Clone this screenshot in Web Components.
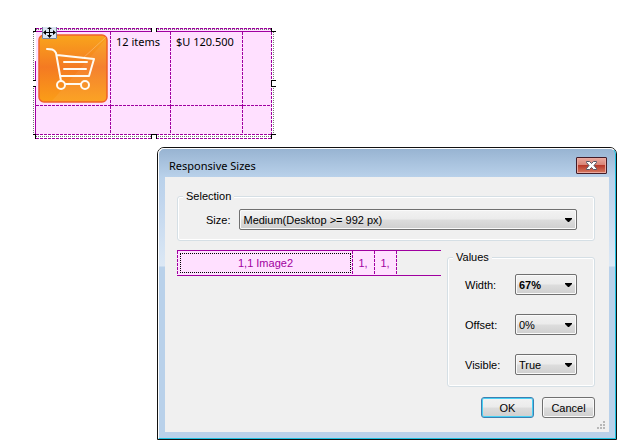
<!DOCTYPE html>
<html lang="en">
<head>
<meta charset="utf-8">
<title>Responsive Sizes</title>
<style>
  body { margin: 0; background: #fff; color: #000; font-family: "Liberation Sans", Arial, sans-serif; font-size: 11px; }
  main { display: flow-root; padding: 28px 7px 8px 33px; }
</style>
</head>
<body>
<main>
  <design-table></design-table>
  <dialog-window caption="Responsive Sizes">
    <group-box caption="Selection">
      <choice-field wide label="Size:" options="Medium(Desktop &gt;= 992 px)|Small|Large"></choice-field>
    </group-box>
    <cell-strip slot="preview"></cell-strip>
    <group-box slot="values" roomy caption="Values">
      <choice-field strong label="Width:" options="67%|50%|100%"></choice-field>
      <choice-field label="Offset:" options="0%|25%|50%"></choice-field>
      <choice-field label="Visible:" options="True|False"></choice-field>
    </group-box>
    <push-button slot="actions" primary>OK</push-button>
    <push-button slot="actions">Cancel</push-button>
  </dialog-window>
</main>
<script>
const define = (name, render) => customElements.define(name, class extends HTMLElement {
  connectedCallback() {
    if (this.shadowRoot) return;
    const t = document.createElement('template');
    t.innerHTML = render(this);
    this.attachShadow({ mode: 'open' }).append(t.content.cloneNode(true));
  }
});

define('design-table', () => `
<style>
  :host { display: grid; position: relative; width: fit-content; grid-template: 4px auto 5px / 3px auto 5px;
    font-family: "Noto Sans", "Open Sans", sans-serif; font-size: 11px;
    --dash-x: repeating-linear-gradient(90deg, #a000a0 0 3px, transparent 3px 4px);
    --dash-y: repeating-linear-gradient(#a000a0 0 3px, transparent 3px 4px);
    --dots-x: repeating-linear-gradient(90deg, #777 0 1px, transparent 1px 2px);
    --dots-y: repeating-linear-gradient(#777 0 1px, transparent 1px 2px); }
  table { border-collapse: collapse; background: #ffe0ff; }
  td { box-sizing: border-box; padding: 2px 2px 0 5px; vertical-align: top; line-height: 16px; white-space: nowrap;
    background: var(--dash-x) bottom / 100% 1px no-repeat, var(--dash-y) right / 1px 100% no-repeat; }
  td:last-child { background: var(--dash-x) bottom / 100% 1px no-repeat; }
  tr:last-child td { background: var(--dash-y) right / 1px 100% no-repeat; }
  tr:last-child td:last-child { background: none; }
  tr { height: 74px; } tr + tr { height: 28px; }
  .c1 { width: 75px; } .c2 { width: 60px; } .c3 { width: 72px; } .c4 { width: 28px; }
  td.pic { padding: 2px 0 0 2px; }
  .pic svg { display: block; }
  .edge { display: flex; align-items: center; justify-content: center; }
  .top { background: var(--dash-x) top / 100% 1px no-repeat, var(--dots-x) 0 1px / 100% 1px no-repeat, linear-gradient(#a000a0, #a000a0) bottom / 100% 1px no-repeat #ffe0ff; }
  .bottom { background: var(--dash-x) top / 100% 1px no-repeat, var(--dots-x) 0 2px / 100% 1px no-repeat, var(--dash-x) bottom / 100% 1px no-repeat; }
  .left { background: var(--dots-y) left / 1px 100% no-repeat, linear-gradient(transparent 29px, #a000a0 29px) right / 1px 100% no-repeat; }
  .right { background: var(--dash-y) left / 1px 100% no-repeat, var(--dots-y) 2px 0 / 1px 100% no-repeat; }
  .left, .right { flex-direction: column; }
  i { flex: none; box-sizing: border-box; background: #fff; width: 6px; height: 5px; border: solid #000; border-width: 0 1px 1px; }
  .bottom i { border-width: 1px 1px 0; }
  .left i { width: 4px; height: 7px; border-width: 1px 1px 1px 0; }
  .right i { width: 5px; height: 7px; border-width: 1px 0 1px 1px; }
  b { box-sizing: border-box; border: 0 solid #000; }
  .tl { border-width: 0 1px 1px 0; } .tr { border-width: 0 0 1px 1px; }
  .bl { border-width: 1px 1px 0 0; } .br { border-width: 1px 0 0 1px; }
  .move { position: absolute; left: 9px; top: -1px; }
</style>
<b class="tl"></b><div class="edge top"><i></i></div><b class="tr"></b>
<div class="edge left"><i></i></div>
<table>
  <tr><td class="c1 pic"><svg width="70" height="69" viewBox="0 0 70 69" role="img" aria-label="Shopping cart">
    <defs><linearGradient id="g" x2="0" y2="1"><stop stop-color="#f9a51c"/><stop offset=".48" stop-color="#f47a22"/><stop offset="1" stop-color="#fb9e17"/></linearGradient></defs>
    <rect x="1" y="1" width="68" height="67" rx="5" fill="url(#g)" stroke="#f0602a" stroke-width="1.5"/>
    <path d="M14 67 68 5v62z" fill="#fff" opacity=".06"/><path d="M44 25 68 3" stroke="#fff" opacity=".25"/>
    <g fill="none" stroke="#fffaf0" stroke-width="2" stroke-linecap="round" stroke-linejoin="round"><path d="M9 15c4 0 7 0 9 4l5 28M19 21l37 4-5 17H22"/><path d="M26 28h23M26 35h22"/><circle cx="23" cy="51" r="4"/><circle cx="47" cy="51" r="4"/><path d="M27 50h16"/></g></svg></td>
    <td class="c2">12 items</td><td class="c3">$U 120.500</td><td class="c4"></td></tr>
  <tr><td></td><td></td><td></td><td></td></tr>
</table>
<div class="edge right"><i></i></div>
<b class="bl"></b><div class="edge bottom"><i></i></div><b class="br"></b>
<svg class="move" width="15" height="12" viewBox="0 0 15 12" aria-hidden="true"><path fill="#dbe6f4" d="M0 0h15v12H0z"/><path d="M.5 0v11.500h14V0" fill="none" stroke="#75849b"/><path d="M7.500 1v9M2 5.500h11" stroke="#000"/><path d="M1 5.500 4 3v5zM14 5.500 11 3v5zM7.500 11 5 8h5zM7.500 0 5 2h5z"/></svg>`);

define('dialog-window', el => `
<style>
  :host { display: block; margin: 8px 0 0 124px; border: 1px solid #111; border-radius: 7px 7px 0 0; background: #fff; }
  .frame { border: 1px solid #fff; border-right-color: #1cc0e0; border-bottom-color: #1cc0e0; border-radius: 6px 6px 0 0; padding: 0 6px 6px;
    background: linear-gradient(#98b4d2 0, #b9d1ea 28px, #c0d5ed 50px, #dce8f5 117px, #b9d1ea 118px); }
  header { display: flex; justify-content: space-between; padding: 8px 2px 3px 4px; }
  h1 { margin: 0; font: 11px/17px "Noto Sans", "Open Sans", sans-serif; }
  .close { display: grid; place-items: center; box-sizing: border-box; width: 31px; height: 17px; padding: 0; border: 1px solid #421c28; border-radius: 1px;
    background: linear-gradient(#e9a99f, #d98477 45%, #b8392a 50%, #d67b62); box-shadow: inset 0 0 0 1px #eba99f; }
  .client { background: #f0f0f0; padding: 12px 3px 2px 12px; }
  .top, .mid, .actions { margin-right: 11px; }
  .mid { display: flex; gap: 6px; margin-top: 9px; }
  .preview { flex: 1; } .values { width: 148px; }
  .actions { display: flex; justify-content: flex-end; gap: 8px; margin-top: 10px; }
  .grip { display: block; margin: 3px 0 0 auto; }
</style>
<div class="frame">
  <header><h1>${el.getAttribute('caption')}</h1>
    <button class="close" aria-label="Close"><svg width="13" height="11" viewBox="0 0 13 11"><path d="M1.500 1.500h3l2 2 2-2h3v1L9 5.500l2.500 3v1h-3l-2-2-2 2h-3v-1l2.500-3-2.500-3z" fill="#fff" stroke="#535666"/></svg></button></header>
  <div class="client">
    <div class="top"><slot></slot></div>
    <div class="mid"><div class="preview"><slot name="preview"></slot></div><div class="values"><slot name="values"></slot></div></div>
    <div class="actions"><slot name="actions"></slot></div>
    <svg class="grip" width="9" height="9" viewBox="0 0 9 9" fill="#b8b8b8" aria-hidden="true"><path d="M6 0h2v2H6zM3 3h2v2H3zM6 3h2v2H6zM0 6h2v2H0zM3 6h2v2H3zM6 6h2v2H6z"/></svg>
  </div>
</div>`);

define('group-box', el => `
<style>
  :host { display: block; }
  fieldset { display: flex; flex-direction: column; gap: 19px; min-width: 0; margin: 0; padding: 6px 17px 10px; border: 1px solid #d5dfe5; border-radius: 3px; box-shadow: inset 0 0 0 1px #fff; }
  :host([roomy]) fieldset { padding-top: 10px; padding-bottom: 11px; }
  legend { margin-left: -12px; padding: 0 3px; background: #f0f0f0; line-height: 14px; }
</style>
<fieldset><legend>${el.getAttribute('caption')}</legend><slot></slot></fieldset>`);

define('choice-field', el => `
<style>
  :host { display: flex; align-items: center; justify-content: space-between; }
  :host([wide]) { justify-content: flex-start; gap: 9px; padding-left: 11px; }
  .box { display: grid; width: 62px; align-items: center; }
  :host([wide]) .box { flex: 1; }
  select, svg { grid-area: 1 / 1; }
  select { appearance: none; box-sizing: border-box; width: 100%; height: 21px; margin: 0; padding: 0 16px 0 3px; border: 1px solid #707070; border-radius: 2px; color: #000;
    background: linear-gradient(#f2f2f2, #ebebeb 49%, #ddd 51%, #cfcfcf); box-shadow: inset 0 0 0 1px #fafafa; font: inherit; }
  :host([strong]) select { font-weight: bold; }
  svg { justify-self: end; margin-right: 5px; pointer-events: none; }
</style>
<label for="s">${el.getAttribute('label')}</label>
<span class="box"><select id="s">${el.getAttribute('options').split('|').map(o => `<option>${o}</option>`).join('')}</select>
<svg width="7" height="4" viewBox="0 0 7 4" aria-hidden="true"><path d="M0 0h7v1L4 4H3L0 1z"/></svg></span>`);

define('cell-strip', () => `
<style>
  :host { display: flex; height: 26px; box-sizing: border-box; border: solid #a000a0; border-width: 1px 0; color: #a000a0;
    --dash-y: repeating-linear-gradient(#a000a0 0 3px, transparent 3px 4px); }
  span { box-sizing: border-box; width: 22px; padding-right: 2px; text-align: center; line-height: 24px; background: var(--dash-y) right / 1px 100% no-repeat #ffe0ff; }
  .first { width: 176px; padding: 2px; background: var(--dash-y) left / 1px 100% no-repeat, var(--dash-y) right / 1px 100% no-repeat #ffe0ff; }
  .focus { display: block; box-sizing: border-box; height: 20px; line-height: 18px; margin: 0 0 0 1px; border: 1px dotted #000; }
</style>
<span class="first"><div class="focus">1,1 Image2</div></span><span>1,</span><span>1,</span>`);

define('push-button', () => `
<style>
  :host { display: block; }
  button { box-sizing: border-box; width: 53px; height: 21px; padding: 0; border: 1px solid #707070; border-radius: 3px; color: #000;
    background: linear-gradient(#f2f2f2, #ebebeb 49%, #ddd 51%, #cfcfcf); box-shadow: inset 0 0 0 1px #fafafa; font: inherit; }
  :host([primary]) button { border-color: #3c7fb1; box-shadow: inset 0 0 0 1px #48d0f4; }
</style>
<button><slot></slot></button>`);
</script>
</body>
</html>
